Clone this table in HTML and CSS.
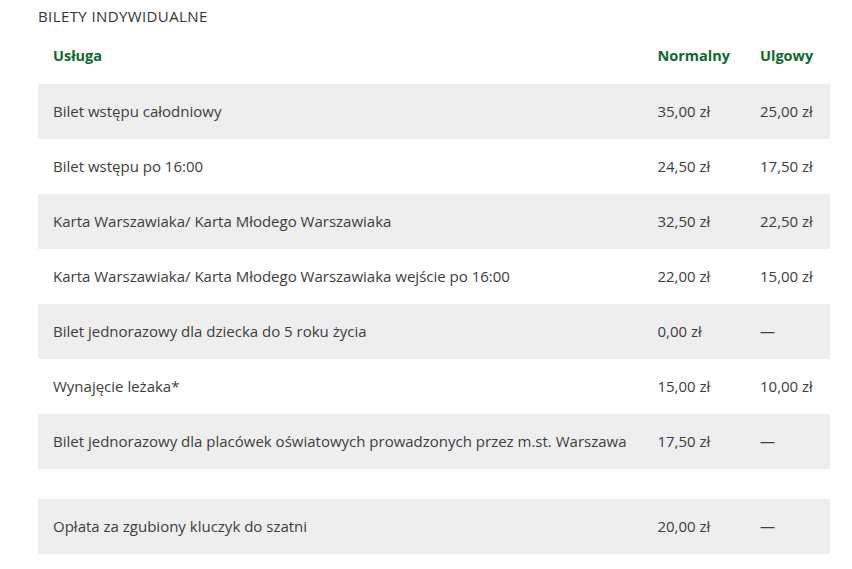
FILE: index.html
```html
<!DOCTYPE html>
<html lang="pl">
<head>
<meta charset="utf-8">
<link rel="stylesheet" href="styles.css">
</head>
<body>
<div class="wrap">
  <h2 class="title">BILETY INDYWIDUALNE</h2>
  <table class="prices">
    <thead>
      <tr><th class="c1">Usługa</th><th class="c2">Normalny</th><th class="c3">Ulgowy</th></tr>
    </thead>
    <tbody>
      <tr><td>Bilet wstępu całodniowy</td><td>35,00 zł</td><td>25,00 zł</td></tr>
      <tr><td>Bilet wstępu po 16:00</td><td>24,50 zł</td><td>17,50 zł</td></tr>
      <tr><td>Karta Warszawiaka/ Karta Młodego Warszawiaka</td><td>32,50 zł</td><td>22,50 zł</td></tr>
      <tr><td>Karta Warszawiaka/ Karta Młodego Warszawiaka wejście po 16:00</td><td>22,00 zł</td><td>15,00 zł</td></tr>
      <tr><td>Bilet jednorazowy dla dziecka do 5 roku życia</td><td>0,00 zł</td><td>—</td></tr>
      <tr><td>Wynajęcie leżaka*</td><td>15,00 zł</td><td>10,00 zł</td></tr>
      <tr><td>Bilet jednorazowy dla placówek oświatowych prowadzonych przez m.st. Warszawa</td><td>17,50 zł</td><td>—</td></tr>
      <tr class="spacer"><td></td><td></td><td></td></tr>
      <tr><td>Opłata za zgubiony kluczyk do szatni</td><td>20,00 zł</td><td>—</td></tr>
    </tbody>
  </table>
</div>
</body>
</html>
```
FILE: styles.css
```css
html, body {
  margin: 0;
  padding: 0;
  background: #fff;
}
body {
  font-family: "Open Sans", "DejaVu Sans", sans-serif;
  color: #3d3d3d;
}
.wrap {
  padding: 7px 22px 0 38px;
}
.title {
  margin: 0;
  font-size: 15px;
  font-weight: 400;
  line-height: 18px;
  color: #333;
  letter-spacing: 0.4px;
}
.prices {
  width: 792px;
  border-collapse: collapse;
  margin-top: 4px;
  font-size: 15px;
}
.prices th {
  text-align: left;
  color: #0b6b2c;
  font-weight: 700;
  font-size: 14.5px;
  height: 55px;
  padding: 0 15px 2px;
  box-sizing: border-box;
}
.prices td {
  height: 55px;
  padding: 0 15px 2px;
  box-sizing: border-box;
}
.prices .c1 { width: 605px; }
.prices .c2 { width: 102px; }
.prices .c3 { width: 85px; }
.prices tbody tr:nth-child(odd) td {
  background: #eeeeee;
}
.prices tr.spacer td {
  height: 30px;
  background: #fff;
}
```
